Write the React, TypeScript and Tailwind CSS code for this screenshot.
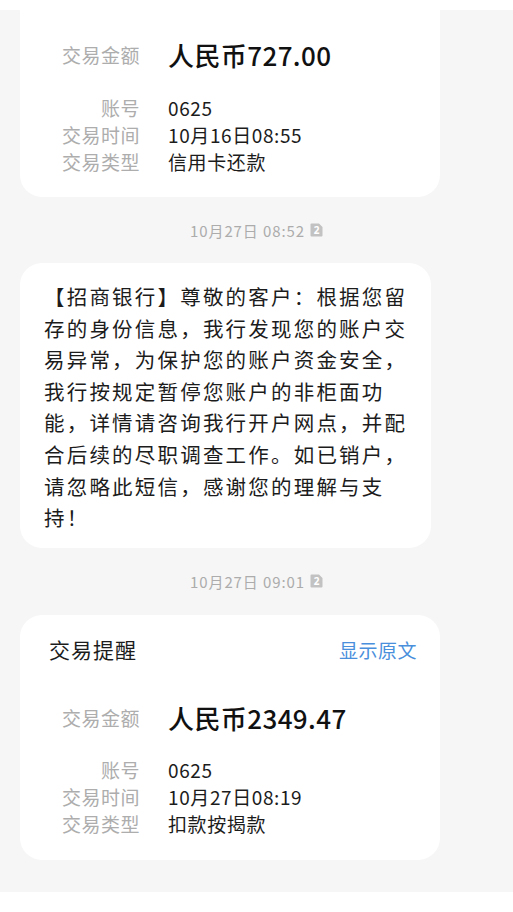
import React from "react";

const FONT = { fontFamily: '"Noto Sans CJK SC", "Noto Sans", sans-serif' };

type Row = { label: string; value: string };

function SimBadge() {
  return (
    <svg width="13" height="14" viewBox="0 0 13 14" className="ml-[5px]">
      <path d="M1.5 0.5 H9 L12.5 4 V12.5 A1 1 0 0 1 11.5 13.5 H1.5 A1 1 0 0 1 0.5 12.5 V1.5 A1 1 0 0 1 1.5 0.5 Z" fill="#c2c2c2" />
      <text x="6.5" y="11" textAnchor="middle" fontSize="10" fontWeight="700" fill="#ffffff" fontFamily="Noto Sans, sans-serif">
        2
      </text>
    </svg>
  );
}

function TimeStamp({ text, className }: { text: string; className: string }) {
  return (
    <div className={`flex items-center justify-center ${className}`}>
      <span className="text-[15px] tracking-[0.9px] text-[#acacac] leading-none">{text}</span>
      <SimBadge />
    </div>
  );
}

// first card is scrolled past its header, so it only shows from the amount row
function TradeCard({ amount, rows, header = true }: { amount: string; rows: Row[]; header?: boolean }) {
  return (
    <div
      className={`mx-[20px] w-[420px] bg-white pl-[29px] pr-[23px] pb-[22.5px] ${
        header ? "rounded-[22px] pt-[21px]" : "rounded-b-[22px] pt-[27px]"
      }`}
    >
      {header && (
        <div className="flex items-center justify-between h-[28px] mb-[36px]">
          <span className="text-[21px] tracking-[1px] text-[#1c1c1c]">交易提醒</span>
          <span className="text-[19px] tracking-[0.5px] text-[#4a8fdc]">显示原文</span>
        </div>
      )}
      <div className="pl-[11px] grid grid-cols-[80px_1fr] gap-x-[28px] items-center">
        <div className="text-right text-[19px] tracking-[0.5px] text-[#adadad] h-[36px] leading-[36px] whitespace-nowrap">
          交易金额
        </div>
        <div className="text-[26px] tracking-[0.4px] font-medium text-[#111] h-[36px] leading-[36px]">{amount}</div>
      </div>
      <div className="pl-[11px] mt-[20.5px] grid grid-cols-[80px_1fr] gap-x-[28px] leading-[27px]">
        {rows.map((r) => (
          <React.Fragment key={r.label}>
            <div className="text-right text-[19px] tracking-[0.5px] text-[#adadad] whitespace-nowrap">{r.label}</div>
            <div className="text-[19px] tracking-[0.6px] text-[#1c1c1c]">{r.value}</div>
          </React.Fragment>
        ))}
      </div>
    </div>
  );
}

const smsLines = [
  "【招商银行】尊敬的客户：根据您留",
  "存的身份信息，我行发现您的账户交",
  "易异常，为保护您的账户资金安全，",
  "我行按规定暂停您账户的非柜面功",
  "能，详情请咨询我行开户网点，并配",
  "合后续的尽职调查工作。如已销户，",
  "请忽略此短信，感谢您的理解与支",
  "持！",
];

export default function App() {
  return (
    <div className="w-[513px] h-[912px] flex flex-col bg-white" style={FONT}>
      <div className="h-[10px] shrink-0 bg-white" />
      <div className="flex-1 overflow-hidden bg-[#f6f6f6]">
        <TradeCard
          header={false}
          amount="人民币727.00"
          rows={[
            { label: "账号", value: "0625" },
            { label: "交易时间", value: "10月16日08:55" },
            { label: "交易类型", value: "信用卡还款" },
          ]}
        />
        <TimeStamp text="10月27日 08:52" className="h-[66px]" />
        <div className="mx-[20px] w-[411px] rounded-[22px] bg-white pl-[24px] pr-[20px] pt-[18px] pb-[14px]">
          {smsLines.map((line, i) => (
            <div key={i} className="whitespace-nowrap text-[20.5px] tracking-[2.2px] leading-[31.6px] text-[#1c1c1c]">
              {line}
            </div>
          ))}
        </div>
        <TimeStamp text="10月27日 09:01" className="h-[67px]" />
        <TradeCard
          amount="人民币2349.47"
          rows={[
            { label: "账号", value: "0625" },
            { label: "交易时间", value: "10月27日08:19" },
            { label: "交易类型", value: "扣款按揭款" },
          ]}
        />
      </div>
      <div className="h-[20px] shrink-0 bg-white" />
    </div>
  );
}
